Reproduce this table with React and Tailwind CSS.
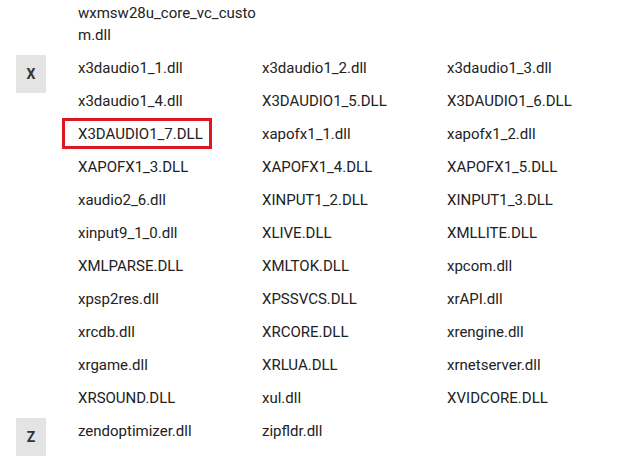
const sections = [
  { letter: null, files: ['wxmsw28u_core_vc_custom.dll'] },
  {
    letter: 'X',
    files: [
      'x3daudio1_1.dll', 'x3daudio1_2.dll', 'x3daudio1_3.dll',
      'x3daudio1_4.dll', 'X3DAUDIO1_5.DLL', 'X3DAUDIO1_6.DLL',
      'X3DAUDIO1_7.DLL', 'xapofx1_1.dll', 'xapofx1_2.dll',
      'XAPOFX1_3.DLL', 'XAPOFX1_4.DLL', 'XAPOFX1_5.DLL',
      'xaudio2_6.dll', 'XINPUT1_2.DLL', 'XINPUT1_3.DLL',
      'xinput9_1_0.dll', 'XLIVE.DLL', 'XMLLITE.DLL',
      'XMLPARSE.DLL', 'XMLTOK.DLL', 'xpcom.dll',
      'xpsp2res.dll', 'XPSSVCS.DLL', 'xrAPI.dll',
      'xrcdb.dll', 'XRCORE.DLL', 'xrengine.dll',
      'xrgame.dll', 'XRLUA.DLL', 'xrnetserver.dll',
      'XRSOUND.DLL', 'xul.dll', 'XVIDCORE.DLL',
    ],
  },
  { letter: 'Z', files: ['zendoptimizer.dll', 'zipfldr.dll'] },
]

const highlighted = 'X3DAUDIO1_7.DLL'

const FileCell = ({ name }) => (
  <div>
    <span
      className={
        'inline-block border-[3px] pl-[13px] pr-[6px] py-[1.5px] leading-[22px] ' +
        (name.length > 24 ? 'w-[207px] break-all ' : 'whitespace-nowrap ') +
        (name === highlighted ? 'border-[#dc1820]' : 'border-transparent')
      }
    >
      {name}
    </span>
  </div>
)

const Section = ({ letter, files }) => (
  <div className="flex mb-[2px]">
    <div className="w-[62px] shrink-0 pl-[16px] pt-[3px]">
      {letter && (
        <div className="w-[30px] h-[38px] bg-[#e4e4e4] flex items-center justify-center font-bold text-[14px] text-[#333]">
          {letter}
        </div>
      )}
    </div>
    <div className="grid grid-cols-[184px_185px_185px] gap-y-[2px] content-start">
      {files.map((f) => (
        <FileCell key={f} name={f} />
      ))}
    </div>
  </div>
)

export default function App() {
  return (
    <div
      className="w-[633px] h-[459px] overflow-hidden bg-white text-[15px] text-[#222]"
      style={{ fontFamily: 'Roboto, "Liberation Sans", sans-serif' }}
    >
      <div className="-mt-[3px]">
        {sections.map((s, i) => (
          <Section key={i} letter={s.letter} files={s.files} />
        ))}
      </div>
    </div>
  )
}
